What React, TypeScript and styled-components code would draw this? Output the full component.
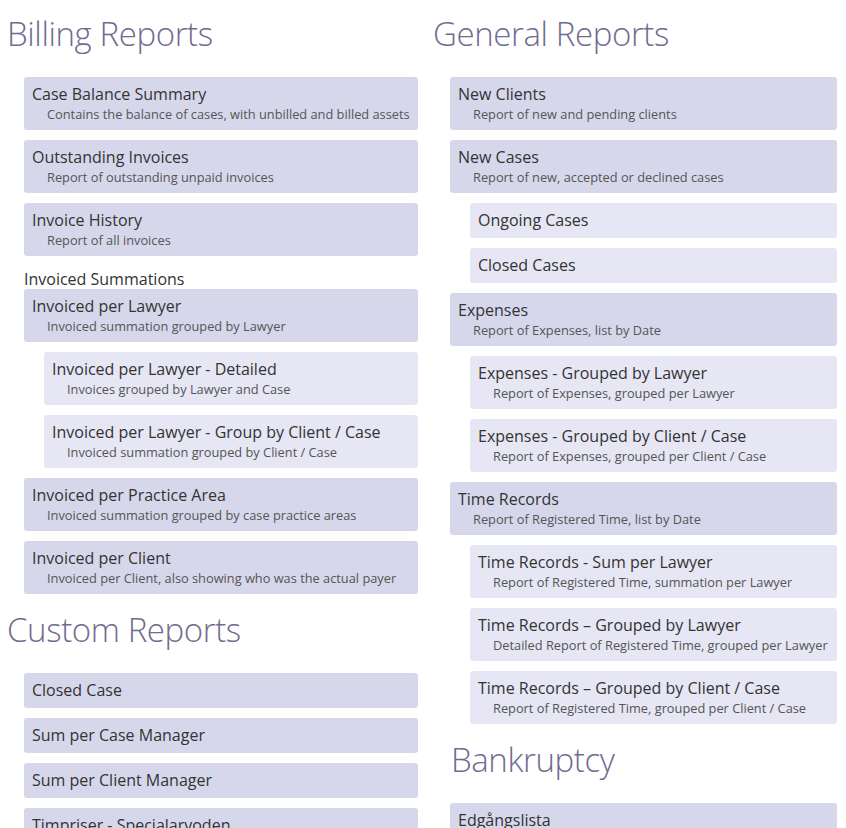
import React from "react";
import styled, { createGlobalStyle } from "styled-components";

const Global = createGlobalStyle`
  html, body { margin: 0; padding: 0; background: #fff; }
  body { font-family: "Open Sans", "Noto Sans", sans-serif; color: #333; overflow: hidden; }
  * { box-sizing: border-box; }
`;

const Page = styled.div`
  display: grid;
  grid-template-columns: 426px 420px;
  width: 846px;
  height: 828px;
  overflow: hidden;
`;

const Column = styled.div<{ $right?: boolean }>`
  display: flex;
  flex-direction: column;
  padding-right: ${(p) => (p.$right ? 9 : 8)}px;
`;

const Heading = styled.h2<{ $indent?: boolean; $top?: number }>`
  margin: ${(p) => p.$top ?? 13}px 0 22px ${(p) => (p.$indent ? 25 : 7)}px;
  font-family: "Open Sans", "Noto Sans", sans-serif;
  font-weight: 300;
  font-size: 33px;
  line-height: 42px;
  color: #716b90;
  letter-spacing: -0.4px;
`;

const List = styled.div`
  display: flex;
  flex-direction: column;
  gap: 10px;
  margin-left: 24px;
`;

const Card = styled.a<{ $nested?: boolean; $short?: boolean }>`
  display: flex;
  flex-direction: column;
  justify-content: center;
  margin-left: ${(p) => (p.$nested ? 20 : 0)}px;
  height: ${(p) => (p.$short ? 35 : 53)}px;
  padding: ${(p) => (p.$short ? "0 8px 1px" : "1px 8px 0")};
  background: ${(p) => (p.$nested ? "#e6e6f4" : "#d7d7ec")};
  border-radius: 3px;
  text-decoration: none;
  color: #333;
`;

const Title = styled.div`
  font-size: 16px;
  line-height: 20px;
  color: #333;
  white-space: nowrap;
`;

const Sub = styled.div`
  font-size: 12.8px;
  line-height: 20px;
  color: #555;
  padding-left: 15px;
  white-space: nowrap;
`;

const GroupLabel = styled.div`
  font-size: 16px;
  line-height: 20px;
  color: #333;
  margin: 3px 0 -10px;
`;

type Item = { t: string; s?: string; n?: boolean };

const R = ({ t, s, n }: Item) => (
  <Card $nested={n} $short={!s}>
    <Title>{t}</Title>
    {s && <Sub>{s}</Sub>}
  </Card>
);

export default function App() {
  return (
    <Page>
      <Global />
      <Column>
        <Heading>Billing Reports</Heading>
        <List>
          <R t="Case Balance Summary" s="Contains the balance of cases, with unbilled and billed assets" />
          <R t="Outstanding Invoices" s="Report of outstanding unpaid invoices" />
          <R t="Invoice History" s="Report of all invoices" />
          <GroupLabel>Invoiced Summations</GroupLabel>
          <R t="Invoiced per Lawyer" s="Invoiced summation grouped by Lawyer" />
          <R n t="Invoiced per Lawyer - Detailed" s="Invoices grouped by Lawyer and Case" />
          <R n t="Invoiced per Lawyer - Group by Client / Case" s="Invoiced summation grouped by Client / Case" />
          <R t="Invoiced per Practice Area" s="Invoiced summation grouped by case practice areas" />
          <R t="Invoiced per Client" s="Invoiced per Client, also showing who was the actual payer" />
        </List>
        <Heading $top={15}>Custom Reports</Heading>
        <List>
          <R t="Closed Case" />
          <R t="Sum per Case Manager" />
          <R t="Sum per Client Manager" />
          <R t="Timpriser - Specialarvoden" />
        </List>
      </Column>
      <Column $right>
        <Heading>General Reports</Heading>
        <List>
          <R t="New Clients" s="Report of new and pending clients" />
          <R t="New Cases" s="Report of new, accepted or declined cases" />
          <R n t="Ongoing Cases" />
          <R n t="Closed Cases" />
          <R t="Expenses" s="Report of Expenses, list by Date" />
          <R n t="Expenses - Grouped by Lawyer" s="Report of Expenses, grouped per Lawyer" />
          <R n t="Expenses - Grouped by Client / Case" s="Report of Expenses, grouped per Client / Case" />
          <R t="Time Records" s="Report of Registered Time, list by Date" />
          <R n t="Time Records - Sum per Lawyer" s="Report of Registered Time, summation per Lawyer" />
          <R n t="Time Records – Grouped by Lawyer" s="Detailed Report of Registered Time, grouped per Lawyer" />
          <R n t="Time Records – Grouped by Client / Case" s="Report of Registered Time, grouped per Client / Case" />
        </List>
        <Heading $indent $top={15}>Bankruptcy</Heading>
        <List>
          <R t="Edgångslista" />
        </List>
      </Column>
    </Page>
  );
}
